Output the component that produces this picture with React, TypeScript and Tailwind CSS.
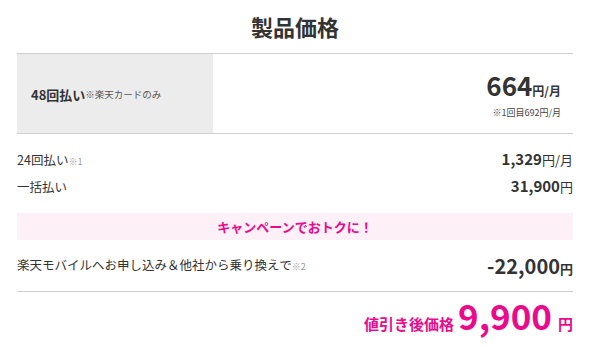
export default function App() {
  return (
    <div
      className="w-[590px] h-[347px] bg-white text-[#333] overflow-hidden"
      style={{ fontFamily: '"Noto Sans CJK JP", "Noto Sans", sans-serif' }}
    >
      <div className="px-[17px] pt-[10px]">
        <h2 className="text-center text-[22px] font-bold leading-[32px] h-[43px]">製品価格</h2>

        {/* 48回払い */}
        <div className="flex border-y border-[#cfcfcf] h-[81px]">
          <div className="w-[196px] bg-[#ececec] flex items-center pl-[14px] pt-[2px]">
            <span className="text-[13px] font-bold">48回払い</span>
            <span className="text-[9.5px] text-[#555]">※楽天カードのみ</span>
          </div>
          <div className="flex-1 flex flex-col items-end justify-center pr-[12px] pt-[2px]">
            <div className="flex items-baseline leading-none">
              <span className="text-[26px] font-bold">664</span>
              <span className="text-[12px] font-bold">円/月</span>
            </div>
            <div className="text-[9px] text-[#444] mt-[10px] leading-none">※1回目692円/月</div>
          </div>
        </div>

        {/* 分割 */}
        <div className="pt-[14px]">
          <div className="flex justify-between items-baseline h-[27px]">
            <div className="text-[12.5px]">
              24回払い<span className="text-[9px] text-[#999]">※1</span>
            </div>
            <div className="flex items-baseline">
              <span className="text-[15px] font-bold">1,329</span>
              <span className="text-[13px]">円/月</span>
            </div>
          </div>
          <div className="flex justify-between items-baseline h-[26px]">
            <div className="text-[12.5px]">一括払い</div>
            <div className="flex items-baseline">
              <span className="text-[15px] font-bold">31,900</span>
              <span className="text-[13px]">円</span>
            </div>
          </div>
        </div>

        <div className="mt-[12px] h-[27px] bg-[#fdf0f7] flex items-center justify-center text-[13px] font-bold text-[#eb0a8b]">
          キャンペーンでおトクに！
        </div>

        <div className="flex justify-between items-center h-[52px] border-b border-[#cfcfcf]">
          <div className="text-[12.5px]">
            楽天モバイルへお申し込み＆他社から乗り換えで<span className="text-[9px] text-[#999]">※2</span>
          </div>
          <div className="flex items-baseline">
            <span className="text-[20px] font-bold">-22,000</span>
            <span className="text-[13px] font-bold">円</span>
          </div>
        </div>

        <div className="flex justify-end items-baseline text-[#eb0a8b] font-bold">
          <span className="text-[15px]">値引き後価格</span>
          <span className="text-[35px] ml-[4px] leading-[46px]">9,900</span>
          <span className="text-[15px] ml-[6px]">円</span>
        </div>
      </div>
    </div>
  );
}
